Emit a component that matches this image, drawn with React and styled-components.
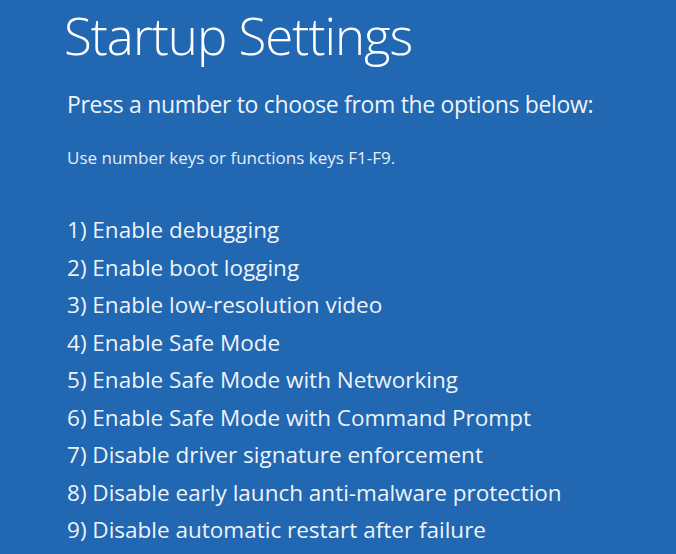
import React from "react";
import styled, { createGlobalStyle } from "styled-components";

const Global = createGlobalStyle`
  html, body { margin: 0; padding: 0; background: #2167b1; }
  body { width: 676px; height: 554px; overflow: hidden; }
`;

const Screen = styled.div`
  width: 676px;
  height: 554px;
  background: #2167b1;
  color: #f4f7fb;
  font-family: "Open Sans", "Noto Sans", sans-serif;
  padding: 0 0 0 64px;
  box-sizing: border-box;
  display: flex;
  flex-direction: column;
`;

const Title = styled.h1`
  margin: 0;
  font-weight: 300;
  font-size: 51px;
  line-height: 70px;
  letter-spacing: -1px;
  color: #ffffff;
`;

const Prompt = styled.p`
  margin: 19px 0 0 3px;
  font-size: 23px;
  line-height: 30px;
  font-weight: 400;
  letter-spacing: -0.33px;
  color: #eef3f9;
`;

const Hint = styled.p`
  margin: 29px 0 0 3px;
  font-size: 17px;
  line-height: 20px;
  letter-spacing: 0;
  color: #e6edf6;
`;

const Options = styled.ol`
  list-style: none;
  margin: 43px 0 0 3px;
  padding: 0;
  display: flex;
  flex-direction: column;
`;

const Option = styled.li`
  font-size: 22.5px;
  line-height: 37.5px;
  letter-spacing: 0;
  color: #eef3f9;
`;

const options = [
  "Enable debugging",
  "Enable boot logging",
  "Enable low-resolution video",
  "Enable Safe Mode",
  "Enable Safe Mode with Networking",
  "Enable Safe Mode with Command Prompt",
  "Disable driver signature enforcement",
  "Disable early launch anti-malware protection",
  "Disable automatic restart after failure",
];

export default function App() {
  return (
    <>
      <Global />
      <Screen>
        <Title>Startup Settings</Title>
        <Prompt>Press a number to choose from the options below:</Prompt>
        <Hint>Use number keys or functions keys F1-F9.</Hint>
        <Options>
          {options.map((o, i) => (
            <Option key={i}>
              {i + 1}) {o}
            </Option>
          ))}
        </Options>
      </Screen>
    </>
  );
}
